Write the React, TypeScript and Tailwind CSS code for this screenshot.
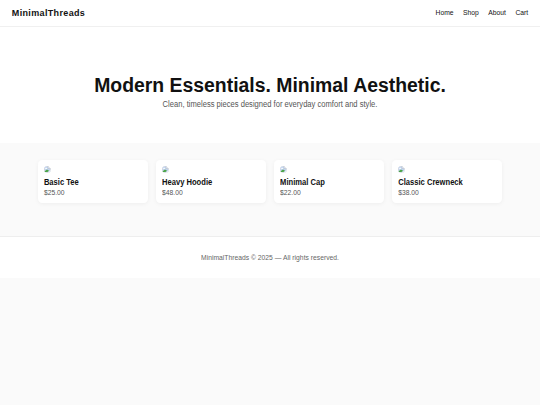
const links = ["Home", "Shop", "About", "Cart"];

const products = [
  { name: "Basic Tee", price: "$25.00" },
  { name: "Heavy Hoodie", price: "$48.00" },
  { name: "Minimal Cap", price: "$22.00" },
  { name: "Classic Crewneck", price: "$38.00" },
];

function ImagePlaceholder() {
  return (
    <svg viewBox="0 0 16 16" className="block h-[6.75px] w-[6.75px] rounded-[3.4px]">
      <path d="M1 1h9l5 5v9H1z" fill="#c3d5f1" stroke="#b4bac2" />
      <path d="M10 1v5h5" fill="#fff" stroke="#a3a9b0" />
      <ellipse cx="5" cy="5.5" rx="2.5" ry="1.5" fill="#fff" />
      <path d="M1.5 14.5v-2L7 8l5 3-4 3.5z" fill="#4ca446" />
      <path d="M9 16l7-6v2l-5 4z" fill="#fff" />
    </svg>
  );
}

export default function App() {
  return (
    <div className="min-h-screen bg-[#fafafa] font-['Liberation_Sans',Arial,sans-serif] text-[#111]">
      <header className="flex h-[27px] items-center justify-between border-b border-[#f0f0f0] bg-white px-[11.8px]">
        <div className="scale-y-[1.08] text-[9px] leading-[10px] font-bold tracking-[0.35px]">MinimalThreads</div>
        <nav className="flex scale-y-[1.12] gap-[9.5px] text-[6.75px] leading-[8px]">
          {links.map((link) => (
            <a key={link} href="#">{link}</a>
          ))}
        </nav>
      </header>

      <section className="h-[116px] bg-white pt-[46.5px] text-center">
        <h1 className="scale-y-[1.06] text-[19.4px] leading-[23px] font-bold">Modern Essentials. Minimal Aesthetic.</h1>
        <p className="mt-[3.5px] scale-y-[1.12] text-[7.6px] leading-[9px] text-[#555]">Clean, timeless pieces designed for everyday comfort and style.</p>
      </section>

      <main className="mx-auto grid h-[93px] w-[464px] grid-cols-4 items-start gap-[8.44px] pt-[17px]">
        {products.map((p) => (
          <div key={p.name} className="h-[42.5px] rounded-[4.2px] bg-white px-[5.9px] pt-[5.9px] shadow-[0_1px_4px_rgba(0,0,0,0.05)]">
            <ImagePlaceholder />
            <h3 className="mt-[5px] scale-y-[1.12] text-[7.6px] leading-[9px] font-bold">{p.name}</h3>
            <p className="mt-[2px] scale-y-[1.12] text-[6.75px] leading-[8px] text-[#555]">{p.price}</p>
          </div>
        ))}
      </main>

      <footer className="flex h-[42px] items-center justify-center border-t border-[#eee] bg-white text-[6.75px] leading-[8px] text-[#666]">
        <p className="scale-y-[1.12]">MinimalThreads © 2025 — All rights reserved.</p>
      </footer>
    </div>
  );
}
